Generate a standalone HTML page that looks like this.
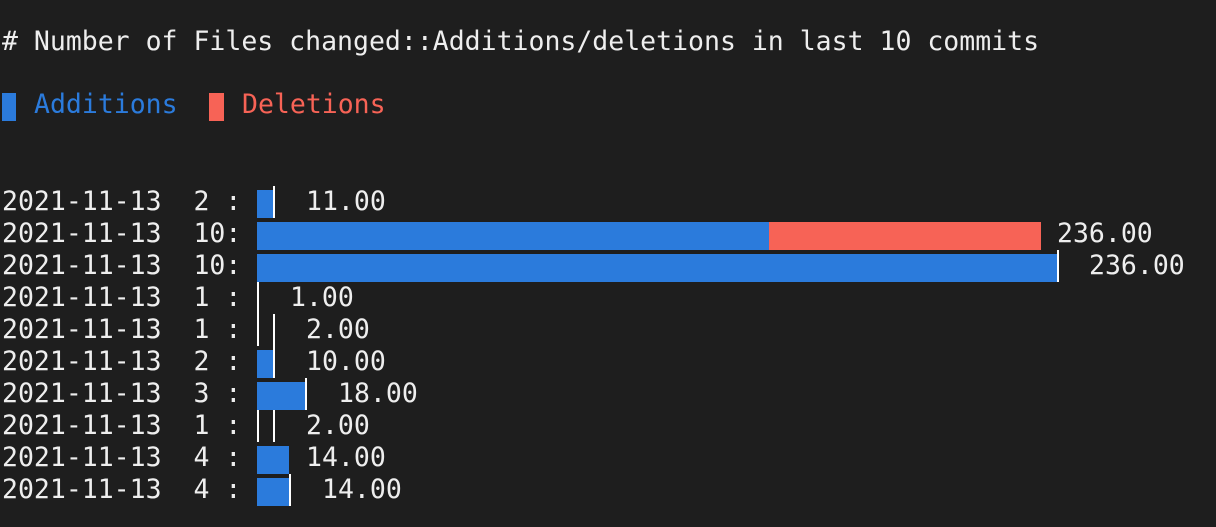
<!DOCTYPE html>
<html><head><meta charset="utf-8"><style>
html,body{margin:0;padding:0;background:#1e1e1e;width:1216px;height:527px;overflow:hidden}
body{position:relative;font-family:"DejaVu Sans Mono","Liberation Mono",monospace;font-size:26.5px;color:#eeeeee}
.t{position:absolute;white-space:pre;line-height:32px;height:32px}
.b{position:absolute;height:28px;background:#2b7bdc}
.r{position:absolute;height:28px;background:#f76356}
.w{position:absolute;width:2px;height:32px;background:#fff}
</style></head><body>
<div class="t" style="left:2px;top:26px"># Number of Files changed::Additions/deletions in last 10 commits</div>
<div class="b" style="left:2px;top:93px;width:14px"></div>
<div class="t" style="left:34px;top:89px;color:#2b7bdc">Additions</div>
<div class="r" style="left:209px;top:93px;width:15px"></div>
<div class="t" style="left:242px;top:89px;color:#f76356">Deletions</div>

<div class="t" style="left:2px;top:186px">2021-11-13  2 :</div>
<div class="b" style="left:257px;top:190px;width:16px"></div><div class="w" style="left:273px;top:186px"></div>
<div class="t" style="left:306px;top:186px">11.00</div>

<div class="t" style="left:2px;top:218px">2021-11-13  10:</div>
<div class="b" style="left:257px;top:222px;width:512px"></div><div class="r" style="left:769px;top:222px;width:272px"></div>
<div class="t" style="left:1057px;top:218px">236.00</div>

<div class="t" style="left:2px;top:250px">2021-11-13  10:</div>
<div class="b" style="left:257px;top:254px;width:800px"></div><div class="w" style="left:1057px;top:250px"></div>
<div class="t" style="left:1089px;top:250px">236.00</div>

<div class="t" style="left:2px;top:282px">2021-11-13  1 :</div>
<div class="w" style="left:257px;top:282px"></div>
<div class="t" style="left:290px;top:282px">1.00</div>

<div class="t" style="left:2px;top:314px">2021-11-13  1 :</div>
<div class="w" style="left:257px;top:314px"></div><div class="w" style="left:273px;top:314px"></div>
<div class="t" style="left:306px;top:314px">2.00</div>

<div class="t" style="left:2px;top:346px">2021-11-13  2 :</div>
<div class="b" style="left:257px;top:350px;width:16px"></div><div class="w" style="left:273px;top:346px"></div>
<div class="t" style="left:306px;top:346px">10.00</div>

<div class="t" style="left:2px;top:378px">2021-11-13  3 :</div>
<div class="b" style="left:257px;top:382px;width:48px"></div><div class="w" style="left:305px;top:378px"></div>
<div class="t" style="left:338px;top:378px">18.00</div>

<div class="t" style="left:2px;top:410px">2021-11-13  1 :</div>
<div class="w" style="left:257px;top:410px"></div><div class="w" style="left:273px;top:410px"></div>
<div class="t" style="left:306px;top:410px">2.00</div>

<div class="t" style="left:2px;top:442px">2021-11-13  4 :</div>
<div class="b" style="left:257px;top:446px;width:32px"></div>
<div class="t" style="left:306px;top:442px">14.00</div>

<div class="t" style="left:2px;top:474px">2021-11-13  4 :</div>
<div class="b" style="left:257px;top:478px;width:32px"></div><div class="w" style="left:289px;top:474px"></div>
<div class="t" style="left:322px;top:474px">14.00</div>
</body></html>
